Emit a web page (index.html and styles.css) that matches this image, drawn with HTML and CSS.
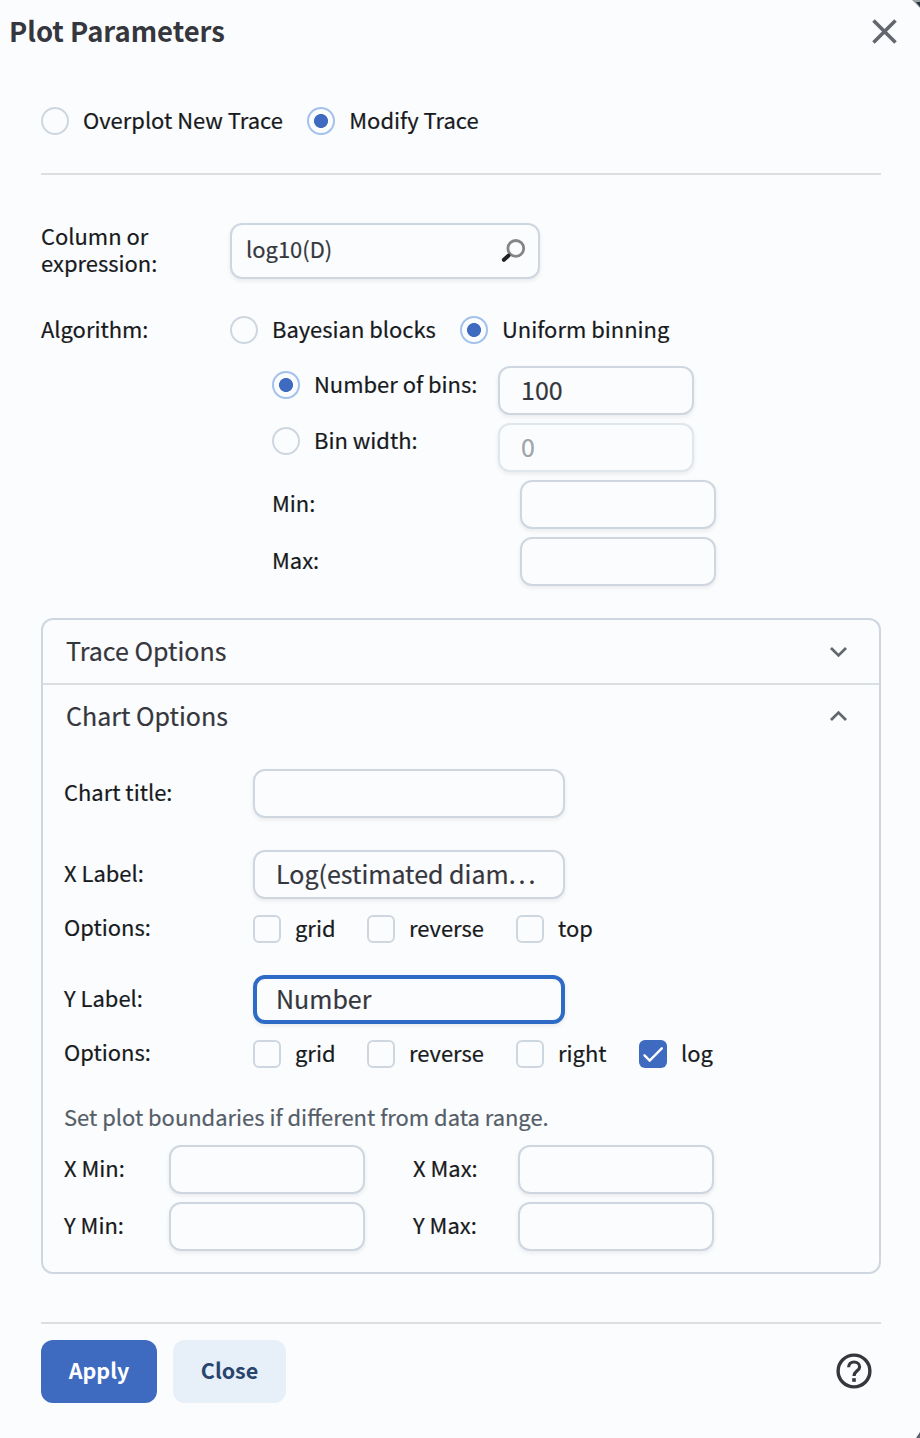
FILE: index.html
```html
<!DOCTYPE html>
<html lang="en">
<head>
<meta charset="utf-8">
<title>Plot Parameters</title>
<link rel="stylesheet" href="styles.css">
</head>
<body>
<main class="dialog">
  <header class="titlebar">
    <h1 class="title">Plot Parameters</h1>
    <svg class="close-icon" width="28" height="28" viewBox="0 0 28 28"><path d="M2.5 2.5L24.5 24.5M24.5 2.5L2.5 24.5" fill="none" stroke="#62666d" stroke-width="3.6"/></svg>
  </header>

  <div class="content">
    <section class="mode">
      <label class="choice"><span class="radio"></span><span class="text">Overplot New Trace</span></label>
      <label class="choice"><span class="radio on"></span><span class="text">Modify Trace</span></label>
    </section>

    <section class="source">
      <div class="expr-row">
        <span class="text two-line">Column or<br>expression:</span>
        <div class="input expr"><span class="expr-value">log10(D)</span>
          <svg class="lens" width="26" height="26" viewBox="0 0 26 26"><circle cx="14.8" cy="10.4" r="7.9" fill="none" stroke="#858585" stroke-width="2.8"/><path d="M8.9 16.4L6.9 18.2" stroke="#777" stroke-width="2.6"/><path d="M7.4 17.7L2.9 21.8" stroke="#222" stroke-width="4" stroke-linecap="round"/></svg>
        </div>
      </div>
      <div class="algo-row">
        <span class="text">Algorithm:</span>
        <label class="choice"><span class="radio"></span><span class="text">Bayesian blocks</span></label>
        <label class="choice"><span class="radio on"></span><span class="text">Uniform binning</span></label>
      </div>
      <div class="bins">
        <div class="bin-radios">
          <label class="choice"><span class="radio on"></span><span class="text">Number of bins:</span></label>
          <label class="choice"><span class="radio"></span><span class="text">Bin width:</span></label>
        </div>
        <div class="bin-inputs">
          <div class="input small"><span class="value">100</span></div>
          <div class="input small disabled"><span class="value">0</span></div>
        </div>
      </div>
      <div class="range">
        <span class="text">Min:</span><div class="input small"></div>
        <span class="text">Max:</span><div class="input small"></div>
      </div>
    </section>

    <section class="accordion">
      <div class="acc-head first"><span class="acc-title">Trace Options</span>
        <svg width="20" height="14" viewBox="0 0 20 14"><path d="M2 3L9.5 10.4L17 3" fill="none" stroke="#62666d" stroke-width="2.8"/></svg></div>
      <div class="acc-head"><span class="acc-title">Chart Options</span>
        <svg width="20" height="14" viewBox="0 0 20 14"><path d="M2 11L9.5 3.6L17 11" fill="none" stroke="#62666d" stroke-width="2.8"/></svg></div>
      <div class="acc-body">
        <div class="field title-field"><span class="text">Chart title:</span><div class="input wide"></div></div>

        <div class="field"><span class="text">X Label:</span><div class="input wide"><span class="value">Log(estimated diam<span class="dots">...</span></span></div></div>
        <div class="options">
          <span class="text opt-label">Options:</span>
          <label class="choice c1"><span class="check"></span><span class="text">grid</span></label>
          <label class="choice c2"><span class="check"></span><span class="text">reverse</span></label>
          <label class="choice c3"><span class="check"></span><span class="text">top</span></label>
        </div>

        <div class="field"><span class="text">Y Label:</span><div class="input wide focus"><span class="value">Number</span></div></div>
        <div class="options">
          <span class="text opt-label">Options:</span>
          <label class="choice c1"><span class="check"></span><span class="text">grid</span></label>
          <label class="choice c2"><span class="check"></span><span class="text">reverse</span></label>
          <label class="choice c3"><span class="check"></span><span class="text">right</span></label>
          <label class="choice"><span class="check on"><svg width="28" height="28" viewBox="0 0 28 28"><path d="M5.5 15.3L10.7 20.5L22.8 8.3" fill="none" stroke="#fff" stroke-width="2.4" stroke-linecap="round"/></svg></span><span class="text">log</span></label>
        </div>

        <p class="text hint">Set plot boundaries if different from data range.</p>
        <div class="bounds">
          <span class="text">X Min:</span><div class="input small"></div><span class="text">X Max:</span><div class="input small"></div>
          <span class="text">Y Min:</span><div class="input small"></div><span class="text">Y Max:</span><div class="input small"></div>
        </div>
      </div>
    </section>

    <footer class="footer">
      <button class="btn primary">Apply</button>
      <button class="btn soft">Close</button>
      <svg class="help" width="36" height="36" viewBox="0 0 36 36"><circle cx="18" cy="18" r="15.9" fill="none" stroke="#35373d" stroke-width="3.4"/><path d="M12.6 14.2C12.6 10.8 15 9 18 9C21.2 9 23.6 11 23.6 13.9C23.6 17.6 18 18.2 18 23" fill="none" stroke="#35373d" stroke-width="3.2"/><rect x="16.2" y="25.2" width="3.6" height="3.6" fill="#35373d"/></svg>
    </footer>
  </div>
  <svg class="corner top" width="8" height="8" viewBox="0 0 8 8"><path d="M0 0H8V8Z" fill="#9ba0a4"/><path d="M4 2H8V7Z" fill="#22333b"/></svg>
  <svg class="corner bottom" width="5" height="6" viewBox="0 0 5 6"><path d="M5 0V6H1Z" fill="#5c636b"/></svg>
</main>
</body>
</html>
```

FILE: styles.css
```css
* { box-sizing: border-box; }
body {
  margin: 0;
  background: #fbfcfe;
  color: #171a1c;
  font-family: "Noto Sans CJK SC", "Noto Sans", sans-serif;
  font-size: 21.95px;
  line-height: 27px;
  -webkit-text-stroke: .2px;
}
.dialog { position: relative; width: 920px; height: 1438px; overflow: hidden; background: #fbfcfe; }
.titlebar { display: flex; justify-content: space-between; align-items: center; height: 63px; padding: 0 21px 0 9px; }
.title { margin: 0; padding-bottom: 2px; font-size: 27.4px; font-weight: 700; color: #35373d; -webkit-text-stroke: 0; }
.content { padding: 0 39px 0 41px; }

.text { padding-bottom: 3px; white-space: nowrap; }
.choice { display: flex; align-items: center; gap: 14px; height: 28px; }
.radio { flex: none; width: 28px; height: 28px; border: 2px solid #ced7e0; border-radius: 50%; }
.radio.on { border-color: #a3c1ec; background: radial-gradient(circle, #3e6bc0 6.6px, transparent 7.4px); }
.check { flex: none; width: 28px; height: 28px; border: 2px solid #ced7e0; border-radius: 6px; }
.check.on { border: 0; background: #3e6bc0; }
.check svg { display: block; }

.input {
  display: flex; align-items: center; height: 49px; padding-left: 21px;
  border: 2px solid #ced7e0; border-radius: 12px; background: #fbfcfe;
  box-shadow: 0 2px 4px rgba(21, 21, 21, .08);
  color: #35373d;
}
.small { width: 196px; }
.wide { width: 312px; }
.value { padding-bottom: 3px; font-size: 25px; white-space: nowrap; }
.dots { letter-spacing: 2.9px; }
.disabled { border-color: #dfe6ec; color: #9fa3a9; }
.focus { border: 4px solid #2e6bc6; padding-left: 19px; }

.mode { display: flex; gap: 24.4px; height: 112px; padding-top: 44px; border-bottom: 2px solid #dcdfe2; }
.source { padding-top: 48px; }
.expr-row { display: grid; grid-template-columns: 189px 310px; height: 56px; }
.two-line { margin-top: -1px; }
.expr { height: 56px; padding: 0 11px 0 14px; justify-content: space-between; }
.expr-value { padding-bottom: 5px; }
.algo-row { display: grid; grid-template-columns: 189px 230px auto; margin-top: 36px; height: 28px; align-items: center; }
.bins { display: flex; margin-top: 23px; padding-left: 231px; }
.bin-radios { display: grid; gap: 28px; width: 226px; padding-top: 5px; align-content: start; }
.bin-inputs { display: grid; gap: 8px; }
.range { display: grid; grid-template-columns: 248px 196px; row-gap: 8px; margin-top: 8px; padding-left: 231px; align-items: center; }
.range > .text, .field > .text, .bounds > .text { padding-bottom: 5px; }

.accordion { height: 656px; margin-top: 32px; border: 2px solid #ced7e0; border-radius: 12px; }
.acc-head { display: flex; align-items: center; justify-content: space-between; height: 62px; padding: 0 31px 0 23px; }
.acc-head svg { margin-right: -1px; }
.acc-head.first { height: 65px; border-bottom: 2px solid #dcdfe2; }
.acc-title { padding-bottom: 2px; font-size: 25px; color: #35373d; }
.acc-body { padding: 22px 21px 0; }
.field { display: grid; grid-template-columns: 189px 312px; align-items: center; height: 49px; }
.title-field { margin-bottom: 32px; }
.options { display: flex; align-items: center; height: 28px; margin: 16px 0 32px; }
.opt-label { width: 189px; padding-bottom: 5px; }
.c1 { width: 114px; }
.c2 { width: 149px; }
.c3 { width: 123px; }
.hint { margin: 35px 0 0; color: #555e68; }
.bounds { display: grid; grid-template-columns: 105px 244px 105px 196px; row-gap: 8px; margin-top: 12px; align-items: center; }

.footer { display: flex; align-items: center; gap: 16px; height: 81px; margin-top: 48px; padding: 16px 9px 0 0; border-top: 2px solid #dcdfe2; }
.btn { height: 63px; padding: 0 0 5px; border: 0; border-radius: 12px; font: 700 21.5px/27px "Noto Sans CJK SC", sans-serif; -webkit-text-stroke: 0; }
.primary { width: 116px; background: #3e6bc0; color: #fff; }
.soft { width: 113px; background: #e7eff8; color: #28456f; }
.help { margin: 0 0 1px auto; }

.corner { position: absolute; right: 0; }
.top { top: 0; }
.bottom { bottom: 0; }
```
